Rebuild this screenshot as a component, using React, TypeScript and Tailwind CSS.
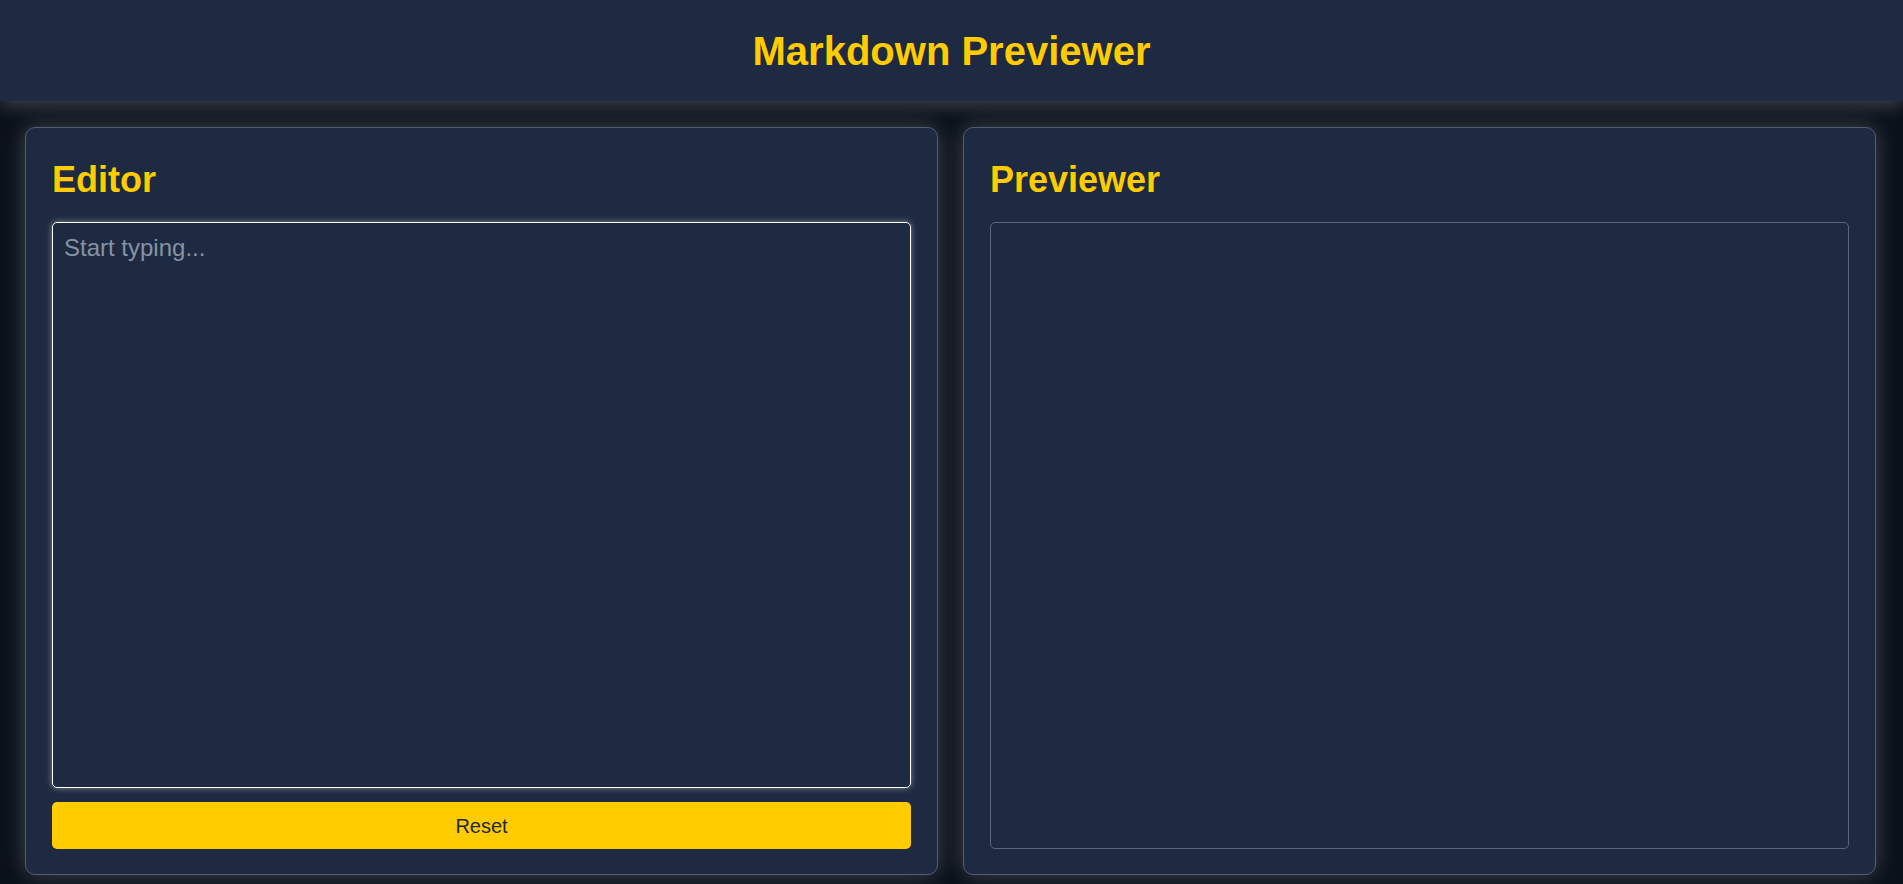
import React, { useState } from "react";

export default function App() {
  const [text, setText] = useState("");
  return (
    <div
      className="min-h-screen bg-[#0b111b] text-white"
      style={{ fontFamily: '"Liberation Sans", Arial, sans-serif' }}
    >
      <header className="relative z-10 flex h-[101px] items-center justify-center bg-[#1d2a42] shadow-[0_4px_18px_rgba(255,255,255,0.22)]">
        <h1 className="text-[40px] font-bold leading-[46px] text-[#ffcc00]">Markdown Previewer</h1>
      </header>
      <main className="relative z-20 flex gap-[25px] pl-[25px] pr-[27px] pt-[26px] pb-[9px]">
        <section className="flex h-[748px] flex-1 flex-col rounded-[10px] border border-[#505d73] bg-[#1d2a42] px-[26px] pt-[32px] pb-[25px] shadow-[0_0_22px_rgba(255,255,255,0.22)]">
          <h2 className="text-[36px] font-bold leading-[40px] text-[#ffcc00]">Editor</h2>
          <textarea
            value={text}
            onChange={(e) => setText(e.target.value)}
            placeholder="Start typing..."
            className="mt-[22px] min-h-0 flex-1 resize-none rounded-[5px] border border-white bg-transparent px-[11px] py-[11px] text-[24px] leading-[28px] text-white shadow-[0_0_6px_rgba(255,255,255,0.45)] outline-none placeholder:text-[#8792a3]"
            style={{ fontFamily: '"Liberation Sans", Arial, sans-serif' }}
          />
          <button
            onClick={() => setText("")}
            className="mt-[14px] h-[47px] w-full rounded-[5px] bg-[#ffcc00] text-[20px] text-[#1d2a42]"
          >
            Reset
          </button>
        </section>
        <section className="flex h-[748px] flex-1 flex-col rounded-[10px] border border-[#505d73] bg-[#1d2a42] px-[26px] pt-[32px] pb-[25px] shadow-[0_0_22px_rgba(255,255,255,0.22)]">
          <h2 className="text-[36px] font-bold leading-[40px] text-[#ffcc00]">Previewer</h2>
          <div className="mt-[22px] flex-1 rounded-[5px] border border-[#5b6679]" />
        </section>
      </main>
    </div>
  );
}
